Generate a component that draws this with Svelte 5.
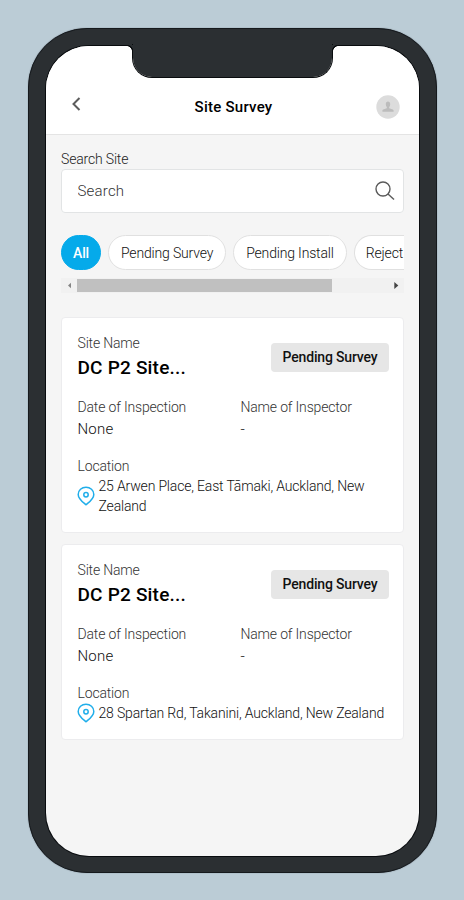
<script>
  const filters = ['All', 'Pending Survey', 'Pending Install', 'Reject'];
  const sites = [
    { name: 'DC P2 Site...', status: 'Pending Survey', date: 'None', inspector: '-', lines: ['25 Arwen Place, East Tāmaki, Auckland, New', 'Zealand'] },
    { name: 'DC P2 Site...', status: 'Pending Survey', date: 'None', inspector: '-', lines: ['28 Spartan Rd, Takanini, Auckland, New Zealand'] }
  ];
</script>

<main class="stage">
  <div class="phone">
    <div class="screen">
      <header>
        <svg class="back" width="12" height="16" viewBox="0 0 12 16"><path d="M9.5 2 3.5 8l6 6" fill="none" stroke="#5c5c5c" stroke-width="2" /></svg>
        <h1>Site Survey</h1>
        <svg class="avatar" width="24" height="24" viewBox="0 0 24 24">
          <circle cx="12" cy="12" r="11.7" fill="#dcdcdc" />
          <path d="M12 6.5c1.4 0 2.2 1.1 2.2 2.7 0 1.2-.4 2.2-1 2.9v1.2l3.6 1.2c.6.3.8.7.8 1.3v1H6.4v-1c0-.6.2-1 .8-1.3l3.6-1.2v-1.2c-.6-.7-1-1.7-1-2.9 0-1.6.8-2.7 2.2-2.7z" fill="#bcbcbc" />
        </svg>
      </header>

      <div class="content">
        <label for="search">Search Site</label>
        <div class="search">
          <input id="search" placeholder="Search" />
          <svg width="20" height="20" viewBox="0 0 20 20" fill="none" stroke="#5a5a5a" stroke-width="1.4"><circle cx="8" cy="8" r="7" /><path d="m13 13 6 5.5" /></svg>
        </div>

        <div class="filters">
          {#each filters as filter, i}
            <button class:active={i === 0} class:last={i === filters.length - 1}>{filter}</button>
          {/each}
        </div>
        <div class="scrollbar">
          <svg width="16" height="15" viewBox="0 0 16 15"><path d="M10 4.8v5.4L7 7.5z" fill="#858585" /></svg>
          <div class="track"><div class="thumb"></div></div>
          <svg width="16" height="15" viewBox="0 0 16 15"><path d="M6.3 4v7l4-3.5z" fill="#444" /></svg>
        </div>

        {#each sites as site}
          <article>
            <div class="top">
              <div>
                <p class="caption">Site Name</p>
                <h2>{site.name}</h2>
              </div>
              <span class="status">{site.status}</span>
            </div>
            <div class="details">
              <div>
                <p class="caption">Date of Inspection</p>
                <p class="value">{site.date}</p>
              </div>
              <div>
                <p class="caption">Name of Inspector</p>
                <p class="value">{site.inspector}</p>
              </div>
            </div>
            <p class="caption">Location</p>
            <div class="location">
              <svg width="18" height="20" viewBox="0 0 18 20" fill="none" stroke="#20aeea" stroke-width="1.5"><path d="M9 18.8C6.4 16.5 1.2 13 1.2 8.4a7.8 7.2 0 0 1 15.6 0c0 4.6-5.2 8.1-7.8 10.4z" /><circle cx="9" cy="8.8" r="2.2" /></svg>
              <p>{#each site.lines as line}<span>{line}</span>{/each}</p>
            </div>
          </article>
        {/each}
      </div>
    </div>
    <div class="notch"></div>
  </div>
</main>

<style>
  .stage {
    box-sizing: border-box;
    height: 900px;
    padding: 28px 27px 27px 28px;
    background: #bbccd6;
    font-family: Roboto, "Liberation Sans", sans-serif;
    overflow: hidden;
  }
  .phone {
    position: relative;
    box-sizing: border-box;
    height: 845px;
    padding: 17px;
    border: 1px solid #15191d;
    border-radius: 59px;
    background: #2b2f32;
    box-shadow: 0 0 1px #58616a;
  }
  .screen {
    height: 810px;
    border-radius: 43px;
    overflow: hidden;
    background: #f5f5f5;
    box-shadow: 0 0 0 1px #080b0e;
  }
  .notch {
    position: absolute;
    top: 15px;
    left: 103px;
    width: 201px;
    height: 34px;
    box-sizing: border-box;
    border: 1px solid #090c0e;
    border-top: 0;
    border-radius: 0 0 20px 20px;
    background: #2b2f32;
    background-clip: padding-box;
  }
  .notch::before, .notch::after {
    content: "";
    position: absolute;
    top: 1px;
    width: 6px;
    height: 6px;
  }
  .notch::before { left: -6px; background: radial-gradient(circle at 0 100%, #fff 4.5px, #090c0e 5px, #090c0e 5.8px, #2b2f32 6.3px); }
  .notch::after { right: -6px; background: radial-gradient(circle at 100% 100%, #fff 4.5px, #090c0e 5px, #090c0e 5.8px, #2b2f32 6.3px); }
  header {
    box-sizing: border-box;
    height: 89px;
    padding: 33px 19px 0 24px;
    display: flex;
    align-items: center;
    justify-content: space-between;
    background: #fff;
    border-bottom: 1px solid #e4e4e4;
  }
  h1, h2, p { margin: 0; white-space: nowrap; }
  h1 { font-size: 15px; letter-spacing: 0.25px; line-height: 20px; font-weight: 500; color: #000; padding-left: 9px; }
  .back { margin-top: -5px; }
  .content { padding: 15px; }
  label { display: block; font-size: 14px; letter-spacing: -0.17px; line-height: 19px; font-weight: 300; color: #222; }
  .search {
    box-sizing: border-box;
    height: 44px;
    padding: 0 8px 0 15.5px;
    display: flex;
    align-items: center;
    background: #fff;
    border: 1px solid #e2e4e5;
    border-radius: 4px;
  }
  input { flex: 1; min-width: 0; padding: 0; border: 0; outline: 0; background: none; font: 300 15px/20px Roboto, sans-serif; letter-spacing: 0.2px; }
  input::placeholder { color: #333; opacity: 1; }
  .filters { display: flex; gap: 7px; height: 35px; margin-top: 22px; overflow: hidden; }
  button {
    flex: none;
    box-sizing: border-box;
    height: 35px;
    padding: 0 12px;
    border: 1px solid #e0e0e0;
    border-radius: 18px;
    background: #fff;
    font: 300 14px/20px Roboto, sans-serif;
    letter-spacing: -0.17px;
    color: #111;
  }
  button.active { width: 40px; padding: 0; border-color: #05aaea; background: #05aaea; color: #fff; font-weight: 500; }
  button.last { flex: 1; min-width: 0; padding: 0 0 0 11px; border-right: 0; border-radius: 18px 0 0 18px; text-align: left; }
  .scrollbar { display: flex; height: 15px; margin-top: 8px; background: #f1f1f1; }
  .track { flex: 1; padding: 1px 0; }
  .thumb { width: 255px; height: 13px; background: #c0c0c0; }
  article {
    box-sizing: border-box;
    margin-top: 11.6px;
    padding: 15px 14px 16px 15.5px;
    border: 1px solid #ececee;
    border-radius: 4px;
    background: #fff;
  }
  .scrollbar + article { margin-top: 23.8px; }
  .top { display: flex; justify-content: space-between; align-items: flex-start; }
  .caption { font-size: 14px; letter-spacing: -0.17px; line-height: 20px; font-weight: 300; color: #333; }
  h2 { font-size: 19px; letter-spacing: 0.2px; line-height: 26px; font-weight: 500; color: #000; margin-top: 2px; }
  .status {
    box-sizing: border-box;
    width: 118px;
    height: 29px;
    margin-top: 10px;
    border-radius: 4px;
    background: #e6e6e6;
    font-size: 14px;
    letter-spacing: -0.17px;
    line-height: 29px;
    font-weight: 500;
    color: #111;
    text-align: center;
  }
  .details { display: grid; grid-template-columns: 163px 1fr; margin: 16px 0 17px; }
  .value { font-size: 15px; letter-spacing: 0.2px; line-height: 20px; font-weight: 300; margin-top: 2px; color: #111; }
  .location { display: flex; align-items: center; gap: 4px; margin-left: -1px; }
  .location svg { flex: none; }
  .location p { font-size: 14px; letter-spacing: -0.17px; line-height: 20px; font-weight: 300; color: #111; }
  .location span { display: block; }
</style>
